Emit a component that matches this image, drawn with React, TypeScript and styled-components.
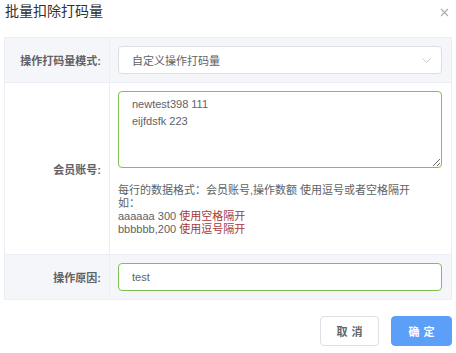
import React from 'react'
import styled, { createGlobalStyle } from 'styled-components'

// ─── Global ───────────────────────────────────────────────────────────────────

const FONT = `"Liberation Sans", "Noto Sans CJK SC", sans-serif`

const GlobalStyle = createGlobalStyle`
  html, body { margin: 0; padding: 0; background: #fff; }
  body { font-family: ${FONT}; color: #606266; }
  * { box-sizing: border-box; }
`

// ─── Styled components ────────────────────────────────────────────────────────

const Dialog = styled.div`
  width: 456px; height: 353px; background: #fff;
  display: flex; flex-direction: column;
`

const Header = styled.div`
  height: 37px; padding: 3px 7px 0 5px;
  display: flex; align-items: flex-start; justify-content: space-between;
`

const Title = styled.div`
  font-size: 14px; line-height: 16px; color: #303133;
`

const CloseBtn = styled.button`
  margin-top: 5px; padding: 0; border: none; background: none; cursor: pointer;
  width: 9px; height: 9px; display: flex;
`

const Table = styled.div`
  margin: 0 4px; border: 1px solid #ebeef5; border-bottom: none;
`

const Row = styled.div<{ $shade?: boolean }>`
  display: grid; grid-template-columns: 105px 1fr;
  background: ${({ $shade }) => ($shade ? '#f5f6fa' : '#fff')};
  border-bottom: 1px solid #ebeef5;
`

const Label = styled.div`
  border-right: 1px solid #ebeef5;
  padding-right: 8px;
  display: flex; align-items: center; justify-content: flex-end;
  font-size: 11px; font-weight: 700; color: #606266;
`

const Cell = styled.div<{ $bottom?: number }>`
  padding: 8px 9px ${({ $bottom }) => $bottom ?? 8}px 8px;
`

const SelectBox = styled.div`
  height: 28px; border: 1px solid #dcdfe6; border-radius: 4px; background: #fff;
  padding: 0 10px 0 13px;
  display: flex; align-items: center; justify-content: space-between;
  font-size: 11px; color: #606266;
`

const TextArea = styled.textarea`
  display: block; width: 100%; height: 77px; margin: 0;
  border: 1px solid #7fc250; border-radius: 4px; outline: none;
  padding: 4px 13px; resize: vertical;
  font-family: ${FONT};
  font-size: 11px; line-height: 17px; color: #606266;
`

const Input = styled.input`
  display: block; width: 100%; height: 28px; margin: 0;
  border: 1px solid #7fc250; border-radius: 4px; outline: none;
  padding: 0 13px;
  font-family: ${FONT};
  font-size: 11px; color: #606266;
`

const Help = styled.div`
  margin-top: 16px; font-size: 11px; line-height: 13px; color: #606266;
`

const Hint = styled.span`color: #a83a3a;`

const Footer = styled.div`
  display: flex; justify-content: flex-end; gap: 12px;
  padding: 16px 4px 0 0;
`

const Btn = styled.button<{ $primary?: boolean }>`
  height: 30px; border-radius: 4px; cursor: pointer;
  font-family: ${FONT};
  font-size: 11px; font-weight: 700; letter-spacing: 4px; text-indent: 4px;
  ${({ $primary }) =>
    $primary
      ? 'width: 61px; background:#5c9ff8; border:1px solid #5c9ff8; color:#fff;'
      : 'width: 59px; background:#fff; border:1px solid #dcdfe6; color:#606266;'}
`

// ─── Component ────────────────────────────────────────────────────────────────

export default function App() {
  return (
    <>
      <GlobalStyle />
      <Dialog>
        <Header>
          <Title>批量扣除打码量</Title>
          <CloseBtn aria-label="close">
            <svg width="9" height="9" viewBox="0 0 9 9">
              <path d="M1 1L8 8M8 1L1 8" stroke="#a8abb2" strokeWidth="1.1" />
            </svg>
          </CloseBtn>
        </Header>

        <Table>
          <Row $shade>
            <Label>操作打码量模式:</Label>
            <Cell>
              <SelectBox>
                <span>自定义操作打码量</span>
                <svg width="9" height="5" viewBox="0 0 9 5">
                  <path d="M0.5 0.5L4.5 4.5L8.5 0.5" fill="none" stroke="#c0c4cc" strokeWidth="0.9" />
                </svg>
              </SelectBox>
            </Cell>
          </Row>

          <Row>
            <Label>会员账号:</Label>
            <Cell $bottom={18}>
              <TextArea defaultValue={'newtest398 111\neijfdsfk 223'} spellCheck />
              <Help>
                <div>每行的数据格式：会员账号,操作数额 使用逗号或者空格隔开</div>
                <div>如：</div>
                <div>aaaaaa 300 <Hint>使用空格隔开</Hint></div>
                <div>bbbbbb,200 <Hint>使用逗号隔开</Hint></div>
              </Help>
            </Cell>
          </Row>

          <Row $shade>
            <Label>操作原因:</Label>
            <Cell>
              <Input defaultValue="test" />
            </Cell>
          </Row>
        </Table>

        <Footer>
          <Btn>取消</Btn>
          <Btn $primary>确定</Btn>
        </Footer>
      </Dialog>
    </>
  )
}
